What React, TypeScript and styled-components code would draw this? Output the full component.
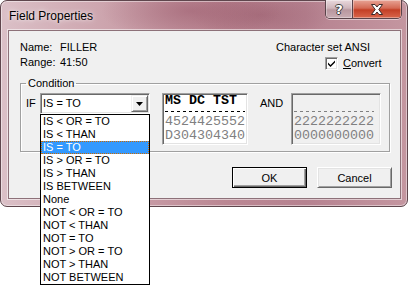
import React from "react";
import styled, { createGlobalStyle } from "styled-components";

const GlobalStyle = createGlobalStyle`
  html, body {
    margin: 0;
    padding: 0;
    background: #ffffff;
  }
  body {
    font-family: "Liberation Sans", Arial, sans-serif;
    font-size: 11px;
    color: #000;
  }
`;

const Page = styled.div`
  width: 409px;
  height: 285px;
  overflow: hidden;
`;

const Window = styled.div`
  width: 408px;
  box-sizing: border-box;
  padding: 0 6px 7px 7px;
  border: 1px solid #5f464d;
  border-radius: 7px;
  background:
    radial-gradient(ellipse 90px 30px at 190px 10px, rgba(155, 90, 108, 0.55), transparent),
    radial-gradient(ellipse 70px 25px at 260px 14px, rgba(150, 88, 105, 0.5), transparent),
    linear-gradient(to right, #dbc0c7 0%, #cda5ae 25%, #bb8793 55%, #b68290 75%, #c496a0 100%);
  box-shadow: inset 0 0 0 1px rgba(255, 255, 255, 0.45);
`;

const TitleBar = styled.div`
  display: flex;
  align-items: flex-start;
  height: 29px;
  margin-right: -1px;
`;

const Title = styled.div`
  margin: 7px 0 0 1px;
  font-family: "Liberation Sans", Arial, sans-serif;
  font-size: 12px;
  line-height: 16px;
  color: #000;
  text-shadow: 0 0 6px rgba(255, 255, 255, 0.8), 0 0 3px rgba(255, 255, 255, 0.6);
`;

const CaptionButtons = styled.div`
  display: flex;
  margin: -1px 0 0 auto;
  border: 1px solid #5a434a;
  border-top: none;
  border-radius: 0 0 5px 5px;
  overflow: hidden;
  box-shadow: 0 1px 0 rgba(255, 255, 255, 0.5);
`;

const CaptionButton = styled.div<{ $close?: boolean }>`
  display: flex;
  align-items: center;
  justify-content: center;
  width: ${(p) => (p.$close ? "48px" : "26px")};
  height: 18px;
  border-left: ${(p) => (p.$close ? "1px solid #5a434a" : "none")};
  background: ${(p) =>
    p.$close
      ? "linear-gradient(to bottom, #e8a496 0%, #d46a55 45%, #c33f26 55%, #d9664c 100%)"
      : "linear-gradient(to bottom, #e9d9dd 0%, #cfb5bb 45%, #b8979f 55%, #c9acb3 100%)"};
  box-shadow: inset 0 0 0 1px rgba(255, 255, 255, 0.35);
`;

const HelpGlyph = styled.span`
  font-family: "DejaVu Sans", sans-serif;
  font-weight: bold;
  font-size: 13px;
  line-height: 13px;
  color: #fff;
  text-shadow: -1px 0 #3d3d3d, 1px 0 #3d3d3d, 0 -1px #3d3d3d, 0 1px #3d3d3d;
`;

const Client = styled.div`
  background: #f0f0f0;
  border: 1px solid #8d7179;
  box-shadow: 0 0 0 1px rgba(255, 255, 255, 0.55);
  padding: 10px 8px 10px 11px;
`;

const InfoGrid = styled.div`
  display: grid;
  grid-template-columns: 40px 216px auto;
  grid-auto-rows: 13px;
  row-gap: 2px;
  line-height: 13px;
`;

const ConvertCell = styled.label`
  display: flex;
  align-items: center;
  gap: 5px;
  padding-left: 49px;
  margin-top: 1px;
`;

const CheckBox = styled.span`
  display: flex;
  align-items: center;
  justify-content: center;
  width: 13px;
  height: 13px;
  box-sizing: border-box;
  background: #fff;
  border: 1px solid;
  border-color: #a0a0a0 #fff #fff #a0a0a0;
  box-shadow: inset 1px 1px #696969, inset -1px -1px #e3e3e3;
`;

const Group = styled.fieldset`
  width: 370px;
  box-sizing: border-box;
  margin: 8px 0 0 0;
  padding: 3px 0 6px 5px;
  border: 1px solid #a0a0a0;
  box-shadow: inset 1px 1px #fff, 1px 1px #fff;
`;

const Legend = styled.legend`
  padding: 0 2px;
  line-height: 13px;
`;

const ConditionRow = styled.div`
  display: flex;
  align-items: flex-start;
`;

const RowLabel = styled.span<{ $width: number; $before?: number; $after?: number }>`
  width: ${(p) => p.$width}px;
  margin-left: ${(p) => p.$before ?? 0}px;
  margin-right: ${(p) => p.$after ?? 0}px;
  line-height: 21px;
`;

const Combo = styled.div`
  position: relative;
  display: flex;
  align-items: center;
  width: 110px;
  height: 21px;
  box-sizing: border-box;
  background: #fff;
  border: 1px solid;
  border-color: #a0a0a0 #fff #fff #a0a0a0;
  box-shadow: inset 1px 1px #696969, inset -1px -1px #e3e3e3;
`;

const ComboText = styled.span`
  flex: 1;
  padding-left: 2px;
  line-height: 17px;
`;

const DropButton = styled.div`
  display: flex;
  align-items: center;
  justify-content: center;
  width: 17px;
  height: 17px;
  box-sizing: border-box;
  margin-right: 1px;
  background: #f0f0f0;
  border: 1px solid;
  border-color: #f0f0f0 #696969 #696969 #f0f0f0;
  box-shadow: inset 1px 1px #fff, inset -1px -1px #a0a0a0;
`;

const DropList = styled.ul`
  position: absolute;
  top: 20px;
  left: -1px;
  width: 110px;
  box-sizing: border-box;
  margin: 0;
  padding: 0;
  list-style: none;
  background: #fff;
  border: 1px solid #000;
  z-index: 2;
`;

const DropItem = styled.li<{ $selected?: boolean }>`
  height: 13px;
  line-height: 13px;
  padding-left: 2px;
  white-space: nowrap;
  color: ${(p) => (p.$selected ? "#fff" : "#000")};
  background: ${(p) => (p.$selected ? "#3399ff" : "transparent")};
  outline: ${(p) => (p.$selected ? "1px dotted #cc6a00" : "none")};
  outline-offset: -1px;
`;

const MonoBox = styled.div<{ $width: number; $disabled?: boolean }>`
  width: ${(p) => p.$width}px;
  height: 52px;
  box-sizing: border-box;
  margin-left: 12px;
  padding-left: 1px;
  background: ${(p) => (p.$disabled ? "#f0f0f0" : "#fff")};
  border: 1px solid;
  border-color: #a0a0a0 #fff #fff #a0a0a0;
  box-shadow: inset 1px 1px #696969, inset -1px -1px #e3e3e3;
  font-family: "Liberation Mono", "DejaVu Sans Mono", monospace;
  font-size: 13.33px;
  overflow: hidden;
`;

const MonoLine = styled.div<{ $head?: boolean; $top?: number }>`
  height: 13px;
  line-height: 13px;
  margin-top: ${(p) => p.$top ?? 0}px;
  padding-left: 1px;
  white-space: pre;
  font-weight: ${(p) => (p.$head ? "bold" : "normal")};
  color: ${(p) => (p.$head ? "#000" : "#808080")};
`;

const Dashes = styled.div<{ $color: string }>`
  width: 80px;
  height: 1px;
  margin: 4px 0 3px 1px;
  background: repeating-linear-gradient(
    to right,
    ${(p) => p.$color} 0 3px,
    transparent 3px 6px
  );
`;

const ButtonRow = styled.div`
  display: flex;
  justify-content: flex-end;
  gap: 10px;
  margin-top: 15px;
`;

const Button = styled.div<{ $default?: boolean }>`
  display: flex;
  align-items: center;
  justify-content: center;
  width: 75px;
  height: 21px;
  box-sizing: border-box;
  background: #f0f0f0;
  border: 1px solid;
  border-color: ${(p) =>
    p.$default ? "#000" : "#fff #696969 #696969 #fff"};
  box-shadow: ${(p) =>
    p.$default
      ? "inset 1px 1px #fff, inset -1px -1px #696969, inset -2px -2px #a0a0a0"
      : "inset 1px 1px #e3e3e3, inset -1px -1px #a0a0a0"};
`;

const conditions = [
  "IS < OR = TO",
  "IS < THAN",
  "IS = TO",
  "IS > OR = TO",
  "IS > THAN",
  "IS BETWEEN",
  "None",
  "NOT < OR = TO",
  "NOT < THAN",
  "NOT = TO",
  "NOT > OR = TO",
  "NOT > THAN",
  "NOT BETWEEN",
];

function CloseGlyph() {
  return (
    <svg width="14" height="11" viewBox="0 0 14 11">
      <path
        d="M1.5 0.5 H5 L7 3 L9 0.5 H12.5 L8.8 5.5 L12.5 10.5 H9 L7 8 L5 10.5 H1.5 L5.2 5.5 Z"
        fill="#fff"
        stroke="#3b2a2a"
        strokeWidth="1"
        strokeLinejoin="round"
      />
    </svg>
  );
}

function CheckMark() {
  return (
    <svg width="9" height="9" viewBox="0 0 9 9">
      <path d="M1 3.5 L3.5 6 L8 1.5 V3.5 L3.5 8 L1 5.5 Z" fill="#000" />
    </svg>
  );
}

function Arrow() {
  return (
    <svg width="7" height="4" viewBox="0 0 7 4">
      <path d="M0 0 H7 L3.5 4 Z" fill="#000" />
    </svg>
  );
}

export default function App() {
  return (
    <Page>
      <GlobalStyle />
      <Window>
        <TitleBar>
          <Title>Field Properties</Title>
          <CaptionButtons>
            <CaptionButton>
              <HelpGlyph>?</HelpGlyph>
            </CaptionButton>
            <CaptionButton $close>
              <CloseGlyph />
            </CaptionButton>
          </CaptionButtons>
        </TitleBar>
        <Client>
          <InfoGrid>
            <span>Name:</span>
            <span>FILLER</span>
            <span>Character set ANSI</span>
            <span>Range:</span>
            <span>41:50</span>
            <ConvertCell>
              <CheckBox>
                <CheckMark />
              </CheckBox>
              <span>
                <u>C</u>onvert
              </span>
            </ConvertCell>
          </InfoGrid>
          <Group>
            <Legend>Condition</Legend>
            <ConditionRow>
              <RowLabel $width={14}>IF</RowLabel>
              <Combo>
                <ComboText>IS = TO</ComboText>
                <DropButton>
                  <Arrow />
                </DropButton>
                <DropList>
                  {conditions.map((c) => (
                    <DropItem key={c} $selected={c === "IS = TO"}>
                      {c}
                    </DropItem>
                  ))}
                </DropList>
              </Combo>
              <MonoBox $width={86}>
                <MonoLine $head>MS DC TST</MonoLine>
                <Dashes $color="#000" />
                <MonoLine>4524425552</MonoLine>
                <MonoLine $top={1}>D304304340</MonoLine>
              </MonoBox>
              <RowLabel $width={22} $before={12} $after={-3}>
                AND
              </RowLabel>
              <MonoBox $width={90} $disabled>
                <MonoLine> </MonoLine>
                <Dashes $color="#808080" />
                <MonoLine>2222222222</MonoLine>
                <MonoLine $top={1}>0000000000</MonoLine>
              </MonoBox>
            </ConditionRow>
          </Group>
          <ButtonRow>
            <Button $default>OK</Button>
            <Button>Cancel</Button>
          </ButtonRow>
        </Client>
      </Window>
    </Page>
  );
}
